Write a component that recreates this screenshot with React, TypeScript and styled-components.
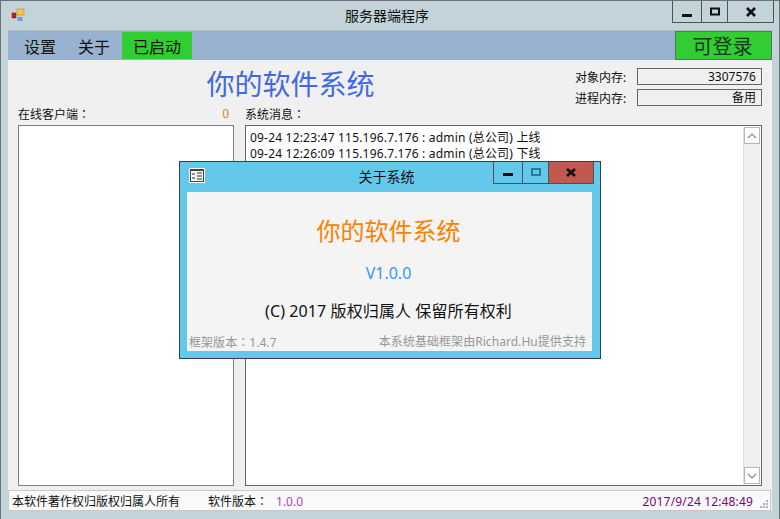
import React from "react";
import styled, { createGlobalStyle } from "styled-components";

const GlobalStyle = createGlobalStyle`
  html, body {
    margin: 0;
    padding: 0;
    background: #c2d4da;
  }
  body {
    font-family: "Noto Sans", "Noto Sans CJK SC", sans-serif;
    font-size: 12px;
    color: #111;
  }
`;

const Frame = styled.div`
  position: relative;
  box-sizing: border-box;
  display: flex;
  flex-direction: column;
  width: 780px;
  height: 519px;
  overflow: hidden;
  background: #c2d4da;
  border: 1px solid #6a7076;
  border-bottom: 0;
`;
const TitleBar = styled.div`
  position: relative;
  display: flex;
  justify-content: center;
  align-items: center;
  flex: none;
  height: 29px;
  font-size: 14px;
  padding-right: 6px;
`;
const TitleText = styled.span`
  margin-top: -1px;
`;
const AppIcon = styled.svg`
  position: absolute;
  left: 10px;
  top: 7px;
`;
const Controls = styled.div<{ $top: number; $right: number }>`
  position: absolute;
  top: ${(p) => p.$top}px;
  right: ${(p) => p.$right}px;
  display: flex;
  height: 21px;
  border: 1px solid #4a5258;
  border-top: 0;
`;
const ControlButton = styled.div<{ $w: number; $bg?: string }>`
  box-sizing: border-box;
  display: flex;
  justify-content: center;
  align-items: center;
  width: ${(p) => p.$w}px;
  background: ${(p) => p.$bg || "transparent"};
  & + & {
    border-left: 1px solid #4a5258;
  }
`;
const Body = styled.div`
  display: flex;
  flex-direction: column;
  flex: 1;
  min-height: 0;
  margin: 0 7px 8px 7px;
  background: #f0f0f0;
`;
const MenuBar = styled.div`
  display: flex;
  justify-content: space-between;
  flex: none;
  height: 30px;
  background: #98b2d0;
  border-top: 1px solid #b4bcc4;
  box-sizing: border-box;
`;
const MenuList = styled.div`
  display: flex;
  align-items: center;
  padding-left: 6px;
`;
const MenuItem = styled.div<{ $on?: boolean }>`
  display: flex;
  justify-content: center;
  align-items: center;
  height: 27px;
  padding: 0 ${(p) => (p.$on ? 11 : 10)}px;
  font-size: 16px;
  margin-right: ${(p) => (p.$on ? 0 : 2)}px;
  background: ${(p) => (p.$on ? "#32cd32" : "transparent")};
`;
const LoginButton = styled.div`
  box-sizing: border-box;
  display: flex;
  justify-content: center;
  align-items: center;
  width: 97px;
  height: 29px;
  padding-right: 2px;
  background: #32cd32;
  border: 1px solid #4d7a55;
  font-size: 20px;
  color: #143a1c;
`;
const Head = styled.div`
  display: flex;
  flex: none;
  height: 46px;
`;
const BigTitle = styled.div`
  display: flex;
  justify-content: center;
  align-items: center;
  width: 565px;
  height: 46px;
  font-size: 28px;
  color: #4169e1;
`;
const MemoryBlock = styled.div`
  display: flex;
  flex-direction: column;
  gap: 4px;
  padding-top: 8px;
`;
const MemoryRow = styled.div`
  display: flex;
  align-items: center;
  height: 17px;
`;
const MemoryLabel = styled.span`
  width: 62px;
  margin-left: 2px;
  white-space: nowrap;
`;
const MemoryValue = styled.div`
  box-sizing: border-box;
  width: 125px;
  height: 17px;
  line-height: 16px;
  padding-right: 5px;
  text-align: right;
  border: 1px solid #666;
`;
const Panels = styled.div`
  display: flex;
  flex: 1;
  min-height: 0;
  gap: 11px;
  padding: 0 9px 0 10px;
`;
const Column = styled.div<{ $w: number }>`
  display: flex;
  flex-direction: column;
  width: ${(p) => p.$w}px;
`;
const ColumnHead = styled.div`
  display: flex;
  justify-content: space-between;
  align-items: center;
  flex: none;
  height: 19px;
  padding: 0 5px 4px 0;
  box-sizing: border-box;
`;
const Colon = styled.span`
  font-family: "Noto Sans CJK TC", sans-serif;
`;
const Count = styled.span`
  color: #cd853f;
`;
const ListBox = styled.div`
  flex: none;
  box-sizing: border-box;
  height: 361px;
  background: #fff;
  border: 1px solid #7a7a82;
`;
const LogBox = styled(ListBox)`
  position: relative;
  padding: 4px 4px;
  line-height: 16px;
  letter-spacing: 0.19px;
  border-color: #666;
`;
const LogLine = styled.div`
  white-space: nowrap;
`;
const ScrollBar = styled.div`
  position: absolute;
  top: 1px;
  right: 1px;
  bottom: 1px;
  display: flex;
  flex-direction: column;
  justify-content: space-between;
  box-sizing: border-box;
  width: 17px;
  background: #f0f0f0;
  border-left: 1px solid #e0e0e0;
`;
const ScrollArrow = styled.div`
  display: flex;
  justify-content: center;
  align-items: center;
  box-sizing: border-box;
  height: 17px;
  background: #fff;
  border: 1px solid #b8b8b8;
`;
const StatusBar = styled.div`
  position: relative;
  box-sizing: border-box;
  display: flex;
  align-items: center;
  flex: none;
  height: 21px;
  margin: 5px 1px 0 0;
  padding: 1px 17px 0 3px;
  background: #fafafa;
  border: 1px solid #c8c8c8;
`;
const StatusText = styled.span<{ $w?: number }>`
  width: ${(p) => (p.$w ? `${p.$w}px` : "auto")};
  white-space: nowrap;
`;
const VersionText = styled.span`
  margin-left: 8px;
  color: #b83cc8;
`;
const ClockText = styled.span`
  margin-left: auto;
  letter-spacing: 0.15px;
  color: #800080;
`;
const Grip = styled.svg`
  position: absolute;
  right: 1px;
  bottom: 1px;
`;
const Dialog = styled.div`
  position: absolute;
  left: 178px;
  top: 160px;
  box-sizing: border-box;
  display: flex;
  flex-direction: column;
  width: 422px;
  height: 198px;
  padding: 0 8px 7px 7px;
  background: #64c8ea;
  border: 1px solid #34404a;
`;
const DialogTitle = styled.div`
  display: flex;
  justify-content: center;
  align-items: center;
  flex: none;
  height: 30px;
  padding: 0 6px 3px 0;
  box-sizing: border-box;
  font-size: 14px;
`;
const DialogIcon = styled.svg`
  position: absolute;
  left: 9px;
  top: 6px;
`;
const DialogBody = styled.div`
  display: flex;
  flex-direction: column;
  align-items: center;
  flex: 1;
  padding-right: 2px;
  background: #f4f4f4;
`;
const DialogName = styled.div`
  margin-top: 23px;
  font-size: 24px;
  line-height: 32px;
  color: #ff8000;
`;
const DialogVersion = styled.div`
  margin-top: 15px;
  font-size: 16px;
  line-height: 22px;
  color: #3a96f0;
`;
const DialogCopyright = styled.div`
  margin-top: 16px;
  font-size: 16px;
  line-height: 22px;
  letter-spacing: 0.1px;
`;
const DialogFoot = styled.div`
  display: flex;
  justify-content: space-between;
  align-self: stretch;
  margin-top: auto;
  padding: 0 4px 0 2px;
  line-height: 17px;
  letter-spacing: 0.05px;
  color: #969696;
`;

const App = () => {
  return (
    <>
      <GlobalStyle />
      <Frame>
        <TitleBar>
          <AppIcon width="15" height="15" viewBox="0 0 15 15">
            <rect x="0.5" y="0.5" width="13" height="13" fill="none" stroke="#d0d0d0" />
            <rect x="1" y="5" width="4" height="5" fill="#c02020" stroke="#801010" strokeWidth="0.5" />
            <rect x="6" y="1" width="7" height="6" fill="#f5c842" stroke="#a08020" strokeWidth="0.5" />
            <rect x="6.5" y="9" width="5" height="4" fill="#6a9ae8" />
          </AppIcon>
          <TitleText>服务器端程序</TitleText>
          <Controls $top={0} $right={5}>
            <ControlButton $w={28}>
              <svg width="12" height="12" viewBox="0 0 12 12">
                <rect x="1" y="8" width="10" height="3" fill="#111" />
              </svg>
            </ControlButton>
            <ControlButton $w={26}>
              <svg width="12" height="12" viewBox="0 0 12 12">
                <rect x="2" y="2.5" width="8" height="6" fill="none" stroke="#111" strokeWidth="2" />
              </svg>
            </ControlButton>
            <ControlButton $w={46}>
              <svg width="12" height="12" viewBox="0 0 12 12">
                <path d="M2 2 L10 10 M10 2 L2 10" stroke="#111" strokeWidth="2.6" />
              </svg>
            </ControlButton>
          </Controls>
        </TitleBar>
        <Body>
          <MenuBar>
            <MenuList>
              <MenuItem>设置</MenuItem>
              <MenuItem>关于</MenuItem>
              <MenuItem $on>已启动</MenuItem>
            </MenuList>
            <LoginButton>可登录</LoginButton>
          </MenuBar>
          <Head>
            <BigTitle>你的软件系统</BigTitle>
            <MemoryBlock>
              <MemoryRow>
                <MemoryLabel>对象内存:</MemoryLabel>
                <MemoryValue>3307576</MemoryValue>
              </MemoryRow>
              <MemoryRow>
                <MemoryLabel>进程内存:</MemoryLabel>
                <MemoryValue>备用</MemoryValue>
              </MemoryRow>
            </MemoryBlock>
          </Head>
          <Panels>
            <Column $w={216}>
              <ColumnHead>
                <span>
                  在线客户端<Colon>：</Colon>
                </span>
                <Count>0</Count>
              </ColumnHead>
              <ListBox />
            </Column>
            <Column $w={517}>
              <ColumnHead>
                <span>
                  系统消息<Colon>：</Colon>
                </span>
              </ColumnHead>
              <LogBox>
                <LogLine>09-24 12:23:47 115.196.7.176 : admin (总公司) 上线</LogLine>
                <LogLine>09-24 12:26:09 115.196.7.176 : admin (总公司) 下线</LogLine>
                <ScrollBar>
                  <ScrollArrow>
                    <svg width="10" height="6" viewBox="0 0 10 6">
                      <path d="M1 5 L5 1 L9 5" fill="none" stroke="#888" strokeWidth="1.2" />
                    </svg>
                  </ScrollArrow>
                  <ScrollArrow>
                    <svg width="10" height="6" viewBox="0 0 10 6">
                      <path d="M1 1 L5 5 L9 1" fill="none" stroke="#888" strokeWidth="1.2" />
                    </svg>
                  </ScrollArrow>
                </ScrollBar>
              </LogBox>
            </Column>
          </Panels>
          <StatusBar>
            <StatusText $w={196}>本软件著作权归版权归属人所有</StatusText>
            <StatusText>
              软件版本<Colon>：</Colon>
            </StatusText>
            <VersionText>1.0.0</VersionText>
            <ClockText>2017/9/24 12:48:49</ClockText>
            <Grip width="10" height="10" viewBox="0 0 10 10" fill="#b0b0b0">
              <rect x="7" y="1" width="2" height="2" />
              <rect x="4" y="4" width="2" height="2" />
              <rect x="7" y="4" width="2" height="2" />
              <rect x="1" y="7" width="2" height="2" />
              <rect x="4" y="7" width="2" height="2" />
              <rect x="7" y="7" width="2" height="2" />
            </Grip>
          </StatusBar>
        </Body>
        <Dialog>
          <DialogIcon width="16" height="15" viewBox="0 0 16 15">
            <rect x="0.5" y="0.5" width="15" height="14" fill="#444" stroke="#fff" />
            <rect x="2" y="3" width="12" height="10" fill="#f4f4f4" />
            <path d="M3 6 H6 M3 10 H6 M8 5 H13 M8 8 H13 M8 11 H13" stroke="#333" />
          </DialogIcon>
          <Controls $top={0} $right={6}>
            <ControlButton $w={28}>
              <svg width="12" height="12" viewBox="0 0 12 12">
                <rect x="1" y="6" width="10" height="3" fill="#111" />
              </svg>
            </ControlButton>
            <ControlButton $w={26}>
              <svg width="12" height="12" viewBox="0 0 12 12">
                <rect x="2" y="2" width="8" height="6" fill="none" stroke="#2f7a98" strokeWidth="2" />
              </svg>
            </ControlButton>
            <ControlButton $w={45} $bg="#c0594f">
              <svg width="12" height="12" viewBox="0 0 12 12">
                <path d="M2 2 L10 9 M10 2 L2 9" stroke="#111" strokeWidth="2.6" />
              </svg>
            </ControlButton>
          </Controls>
          <DialogTitle>关于系统</DialogTitle>
          <DialogBody>
            <DialogName>你的软件系统</DialogName>
            <DialogVersion>V1.0.0</DialogVersion>
            <DialogCopyright>(C) 2017 版权归属人 保留所有权利</DialogCopyright>
            <DialogFoot>
              <span>
                框架版本<Colon>：</Colon>1.4.7
              </span>
              <span>本系统基础框架由Richard.Hu提供支持</span>
            </DialogFoot>
          </DialogBody>
        </Dialog>
      </Frame>
    </>
  );
};

export default App;
